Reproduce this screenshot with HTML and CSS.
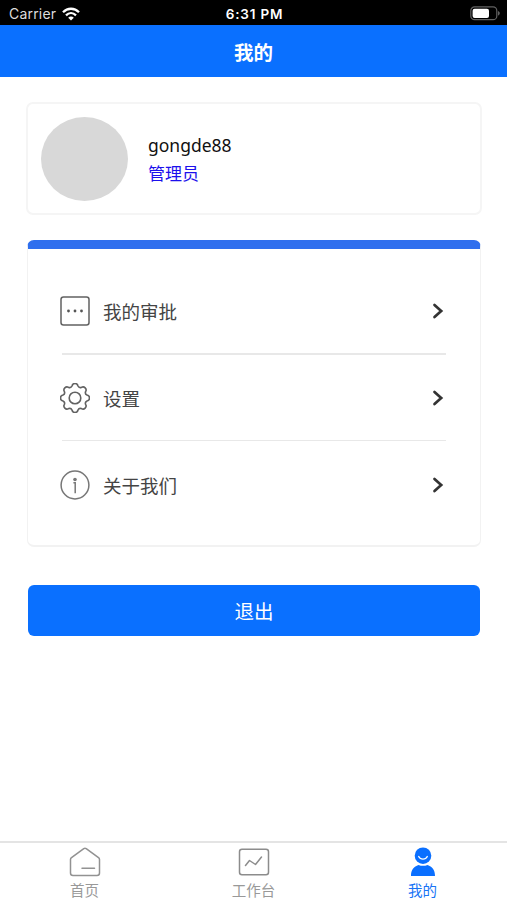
FILE: index.html
```html
<!DOCTYPE html>
<html lang="zh-CN">
<head>
  <meta charset="UTF-8">
  <meta name="viewport" content="width=device-width, initial-scale=1.0">
  <title>我的</title>
  <link rel="stylesheet" href="styles.css">
</head>
<body>
  <div class="status-bar">
    <div class="carrier">
      <span>Carrier</span>
      <svg width="18" height="14" viewBox="0 0 18 14" fill="none" stroke="#fff" stroke-width="2.3">
        <path d="M1 5.2 C5.5 0.6 12.5 0.6 17 5.2"/>
        <path d="M4 8.3 C7 5.4 11 5.4 14 8.3"/>
        <path d="M9 13.6 L6.2 10.7 C7.8 9.2 10.2 9.2 11.8 10.7 Z" fill="#fff" stroke="none"/>
      </svg>
    </div>
    <div class="time">6:31 PM</div>
    <div class="battery">
      <svg width="30" height="15" viewBox="0 0 30 15">
        <rect x="0.8" y="0.9" width="26" height="12.8" rx="3.8" fill="none" stroke="#626262" stroke-width="1.2"/>
        <rect x="2.6" y="2.7" width="16.4" height="9.2" rx="2" fill="#fff"/>
        <path d="M28.2 5 C30.1 5.8 30.1 8.8 28.2 9.6 Z" fill="#777"/>
      </svg>
    </div>
  </div>

  <header class="navbar">我的</header>

  <main>
    <section class="profile">
      <div class="avatar"></div>
      <div class="info">
        <div class="name">gongde88</div>
        <div class="role">管理员</div>
      </div>
    </section>

    <section class="menu">
      <div class="menu-item">
        <svg class="icon" viewBox="0 0 30 30" fill="none" stroke="#626262" stroke-width="1.5">
          <rect x="1" y="1" width="28" height="28" rx="2.5"/>
          <g fill="#555" stroke="none">
            <circle cx="8.5" cy="15" r="1.4"/>
            <circle cx="15" cy="15" r="1.4"/>
            <circle cx="21.5" cy="15" r="1.4"/>
          </g>
        </svg>
        <span>我的审批</span>
        <svg class="arrow" viewBox="0 0 12 18"><path d="M2.5 3 L9.2 9 L2.5 15"/></svg>
      </div>
      <div class="menu-item">
        <svg class="icon" viewBox="-15 -15 30 30" fill="none" stroke="#626262" stroke-width="1.6" stroke-linejoin="round">
          <path d="M-3 -12 A3.05 3.05 0 0 1 3 -12 A2.7 2.7 0 0 0 6.4 -10.6 A3.05 3.05 0 0 1 10.6 -6.4 A2.7 2.7 0 0 0 12 -3 A3.05 3.05 0 0 1 12 3 A2.7 2.7 0 0 0 10.6 6.4 A3.05 3.05 0 0 1 6.4 10.6 A2.7 2.7 0 0 0 3 12 A3.05 3.05 0 0 1 -3 12 A2.7 2.7 0 0 0 -6.4 10.6 A3.05 3.05 0 0 1 -10.6 6.4 A2.7 2.7 0 0 0 -12 3 A3.05 3.05 0 0 1 -12 -3 A2.7 2.7 0 0 0 -10.6 -6.4 A3.05 3.05 0 0 1 -6.4 -10.6 A2.7 2.7 0 0 0 -3 -12 Z"/>
          <circle r="5.8"/>
        </svg>
        <span>设置</span>
        <svg class="arrow" viewBox="0 0 12 18"><path d="M2.5 3 L9.2 9 L2.5 15"/></svg>
      </div>
      <div class="menu-item">
        <svg class="icon" viewBox="0 0 30 30" fill="none" stroke="#777" stroke-width="1.5">
          <circle cx="15" cy="15" r="13.9"/>
          <path d="M13.4 12.8 H15.2 V23.2"/>
          <circle cx="15" cy="9.5" r="1.8" fill="#777" stroke="none"/>
        </svg>
        <span>关于我们</span>
        <svg class="arrow" viewBox="0 0 12 18"><path d="M2.5 3 L9.2 9 L2.5 15"/></svg>
      </div>
    </section>

    <button class="logout" type="button">退出</button>
  </main>

  <nav class="tabbar">
    <a class="tab">
      <svg viewBox="0 0 32 30" fill="none" stroke="#929292" stroke-width="1.5" stroke-linejoin="round" stroke-linecap="round">
        <path d="M1.5 12.5 Q1.5 11.5 2.5 10.7 L14.8 1.6 Q16 0.7 17.2 1.6 L29.5 10.7 Q30.5 11.5 30.5 12.5 V26 Q30.5 28.5 28 28.5 H4 Q1.5 28.5 1.5 26 Z"/>
        <path d="M13 21.3 H25.5"/>
      </svg>
      <span>首页</span>
    </a>
    <a class="tab">
      <svg viewBox="0 0 32 30" fill="none" stroke="#8c8c8c" stroke-width="1.5" stroke-linejoin="round" stroke-linecap="round">
        <rect x="1.5" y="2.2" width="29" height="25.5" rx="2.5"/>
        <path d="M7.5 18.5 L11.5 13.5 L17.5 17.5 L23.5 10"/>
      </svg>
      <span>工作台</span>
    </a>
    <a class="tab active">
      <svg viewBox="0 0 32 30">
        <circle cx="16" cy="8.7" r="8.3" fill="#0a6fff"/>
        <path d="M11.7 9.5 C13.5 13 18.5 13 20.3 9.5" fill="none" stroke="#fff" stroke-width="1.4" stroke-linecap="round"/>
        <path d="M4 29 C3.8 23 7 19.3 11.5 17.9 Q16 19.6 20.5 17.9 C25 19.3 28.2 23 28 29 Z" fill="#0a6fff"/>
      </svg>
      <span>我的</span>
    </a>
  </nav>
</body>
</html>
```
FILE: styles.css
```css
* {
  box-sizing: border-box;
}
body {
  margin: 0;
  height: 900px;
  display: flex;
  flex-direction: column;
  background: #fff;
  font-family: "Noto Sans", "Noto Sans CJK SC", sans-serif;
  overflow: hidden;
}
svg {
  display: block;
  flex-shrink: 0;
}
.status-bar {
  display: grid;
  grid-template-columns: 1fr auto 1fr;
  align-items: center;
  height: 25px;
  padding: 2px 7px 0 9px;
  background: #000;
  color: #fff;
  font-family: Inter, sans-serif;
  font-size: 14px;
}
.carrier {
  display: flex;
  align-items: center;
  gap: 6px;
  color: #ddd;
  letter-spacing: 0.2px;
}
.time {
  font-weight: 600;
  font-size: 13.5px;
  letter-spacing: 0.8px;
}
.battery {
  justify-self: end;
}
.navbar {
  height: 52px;
  line-height: 56px;
  background: #0a70ff;
  color: #fff;
  text-align: center;
  font-size: 19.5px;
  font-weight: 700;
}
main {
  flex: 1;
  padding: 25px 26px 0;
}
.profile {
  display: flex;
  align-items: center;
  gap: 20px;
  height: 113px;
  margin-right: -1px;
  padding: 0 13px;
  border: 2px solid #f5f5f5;
  border-radius: 7px;
}
.avatar {
  width: 87px;
  height: 84px;
  border-radius: 50%;
  background: #d8d8d8;
}
.info {
  padding-top: 2px;
}
.name {
  line-height: 28px;
  font-size: 17.5px;
  color: #111;
}
.role {
  line-height: 30px;
  font-size: 17px;
  color: #1c10ec;
}
.menu {
  height: 307px;
  margin: 25px 0 0 1px;
  padding: 19px 34px 0;
  border: 1px solid #f2f2f2;
  border-top: 9px solid #2f6fee;
  border-bottom-width: 2px;
  border-radius: 7px;
}
.menu-item {
  display: flex;
  align-items: center;
  height: 87px;
  padding-right: 2px;
  font-size: 18.5px;
  color: #444;
}
.menu-item:first-child {
  border-bottom: 2px solid #e8e8e8;
}
.menu-item:nth-child(2) {
  height: 86px;
  border-bottom: 1px solid #e8e8e8;
}
.menu-item span {
  flex: 1;
  margin-left: 13px;
}
.icon {
  width: 30px;
  height: 30px;
  margin-left: -2px;
}
.arrow {
  width: 12px;
  height: 18px;
  fill: none;
  stroke: #333;
  stroke-width: 2.7;
  stroke-linecap: round;
}
.logout {
  display: block;
  width: 452px;
  height: 51px;
  margin: 38px 0 0 2px;
  padding: 0;
  border: none;
  border-radius: 6px;
  background: #0a70ff;
  color: #fff;
  font-family: inherit;
  font-size: 19.5px;
  line-height: 53px;
}
.tabbar {
  display: flex;
  height: 59px;
  border-top: 2px solid #e4e4e4;
}
.tab {
  flex: 1;
  display: flex;
  flex-direction: column;
  align-items: center;
  padding-top: 4px;
  font-size: 14.5px;
  line-height: 26px;
  color: #999;
}
.tab svg {
  width: 32px;
  height: 30px;
}
.tab.active {
  color: #1974f5;
}
```
